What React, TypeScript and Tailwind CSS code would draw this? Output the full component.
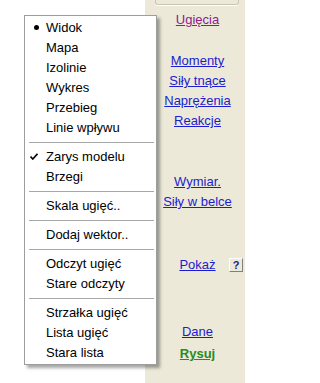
import React from "react";

type Item = { label: string; mark?: "dot" | "check" } | { sep: true };

const items: Item[] = [
  { label: "Widok", mark: "dot" },
  { label: "Mapa" },
  { label: "Izolinie" },
  { label: "Wykres" },
  { label: "Przebieg" },
  { label: "Linie wpływu" },
  { sep: true },
  { label: "Zarys modelu", mark: "check" },
  { label: "Brzegi" },
  { sep: true },
  { label: "Skala ugięć.." },
  { sep: true },
  { label: "Dodaj wektor.." },
  { sep: true },
  { label: "Odczyt ugięć" },
  { label: "Stare odczyty" },
  { sep: true },
  { label: "Strzałka ugięć" },
  { label: "Lista ugięć" },
  { label: "Stara lista" },
];

function Link({ children, className = "" }: { children: React.ReactNode; className?: string }) {
  return (
    <div className={"h-[20px] leading-[20px] text-center underline text-[#1c1cd0] " + className}>
      {children}
    </div>
  );
}

export default function App() {
  return (
    <div
      className="relative flex w-[245px] h-[383px] overflow-hidden text-[13px]"
      style={{ fontFamily: '"Liberation Sans", Arial, sans-serif' }}
    >
      <div className="w-[145px] h-full bg-white" />
      <div className="flex-1 h-full bg-[#ECE9D8] pl-[5px] flex flex-col">
        <div className="ml-[5px] mr-[6px] h-[5px] border-l border-r border-b border-[#c8c5b4] rounded-b-[3px] shadow-[0_1px_0_#ffffff]" />
        <Link className="mt-[5px] text-[#8e1c8e]">Ugięcia</Link>
        <Link className="mt-[21px]">Momenty</Link>
        <Link>Siły tnące</Link>
        <Link>Naprężenia</Link>
        <Link>Reakcje</Link>
        <Link className="mt-[41px] h-[19px] leading-[19px]">Wymiar.</Link>
        <Link className="h-[19px] leading-[19px]">Siły w belce</Link>
        <div className="mt-[43px] h-[20px] grid grid-cols-[1fr_auto_1fr] items-center">
          <div />
          <div className="underline text-[#1c1cd0] leading-[20px]">Pokaż</div>
          <div className="flex justify-end pr-[2px]">
            <div className="w-[14px] h-[14px] flex items-center justify-center bg-[#ECE9D8] border border-t-white border-l-white border-r-[#808080] border-b-[#808080] text-[11px] font-bold text-[#1a1a8c] leading-none">
              ?
            </div>
          </div>
        </div>
        <Link className="mt-[47px]">Dane</Link>
        <Link className="mt-[2px] font-bold text-[#2b8a22]">Rysuj</Link>
      </div>

      <div className="absolute left-[24px] top-[15px] w-[133px] h-[350px] bg-white border border-[#9d9d9d] shadow-[3px_3px_3px_rgba(0,0,0,0.35)] pt-[2px] pb-[1px] flex flex-col">
        {items.map((it, i) =>
          "sep" in it ? (
            <div key={i} className="h-[9px] flex items-center pl-[4px] pr-[2px]">
              <div className="w-full h-px bg-[#a8a8a8]" />
            </div>
          ) : (
            <div key={i} className="relative h-[20px] flex items-center pl-[21px] text-black">
              {it.mark === "dot" && (
                <div className="absolute left-[9px] top-[7px] w-[5px] h-[5px] rounded-full bg-black" />
              )}
              {it.mark === "check" && (
                <svg className="absolute left-[5px] top-[6px]" width="8" height="7" viewBox="0 0 8 7">
                  <path d="M0.5 3.5 L2.8 6 L7.5 0.8" fill="none" stroke="#000" strokeWidth="1.6" />
                </svg>
              )}
              <span>{it.label}</span>
            </div>
          )
        )}
      </div>
    </div>
  );
}
